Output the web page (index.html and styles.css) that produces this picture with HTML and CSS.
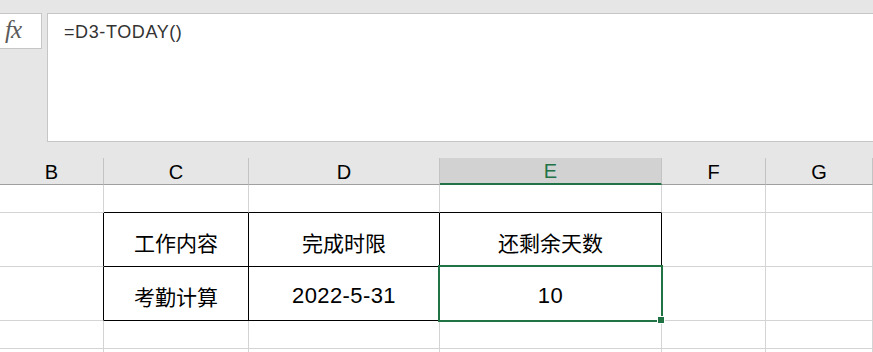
FILE: index.html
```html
<!DOCTYPE html>
<html lang="zh-CN">
<head>
    <meta charset="UTF-8">
    <meta name="viewport" content="width=device-width, initial-scale=1.0">
    <title>还剩余天数</title>
    <link rel="stylesheet" href="styles.css">
</head>
<body>
    <div class="formula-bar">
        <div class="fx">fx</div>
        <div class="formula">=D3-TODAY()</div>
    </div>
    <div class="sheet">
        <div class="head">B</div>
        <div class="head">C</div>
        <div class="head">D</div>
        <div class="head active">E</div>
        <div class="head">F</div>
        <div class="head">G</div>

        <div class="cell short"></div>
        <div class="cell short above"></div>
        <div class="cell short above"></div>
        <div class="cell short above"></div>
        <div class="cell short"></div>
        <div class="cell short"></div>

        <div class="cell tall before"></div>
        <div class="cell tall boxed">工作内容</div>
        <div class="cell tall boxed">完成时限</div>
        <div class="cell tall boxed">还剩余天数</div>
        <div class="cell tall"></div>
        <div class="cell tall"></div>

        <div class="cell tall before"></div>
        <div class="cell tall boxed">考勤计算</div>
        <div class="cell tall boxed num">2022-5-31</div>
        <div class="cell tall boxed num selected">10</div>
        <div class="cell tall"></div>
        <div class="cell tall"></div>

        <div class="cell short"></div>
        <div class="cell short"></div>
        <div class="cell short"></div>
        <div class="cell short"></div>
        <div class="cell short"></div>
        <div class="cell short"></div>

        <div class="cell last"></div>
        <div class="cell last"></div>
        <div class="cell last"></div>
        <div class="cell last"></div>
        <div class="cell last"></div>
        <div class="cell last"></div>
    </div>
</body>
</html>
```

FILE: styles.css
```css
body {
    margin: 0;
    background-color: #e6e6e6;
    font-family: "Liberation Sans", "Noto Sans CJK SC", sans-serif;
    color: #000;
    overflow: hidden;
}
.formula-bar {
    display: flex;
    align-items: flex-start;
    gap: 5px;
    padding-top: 13px;
    height: 129px;
}
.fx {
    width: 42px;
    height: 36px;
    box-sizing: border-box;
    background: white;
    border: 1px solid #c6c6c6;
    border-left: none;
    display: flex;
    align-items: center;
    padding: 0 0 3px 5px;
    font-family: "Liberation Serif", serif;
    font-style: italic;
    font-size: 25px;
    color: #5a5a5a;
    letter-spacing: -1px;
}
.formula {
    flex: 1;
    height: 129px;
    background: white;
    border: 1px solid #c6c6c6;
    border-right: none;
    box-sizing: border-box;
    padding: 7px 0 0 16px;
    font-size: 18px;
    line-height: 22px;
    color: #333;
    letter-spacing: 0.6px;
}
.sheet {
    margin-top: 16px;
    display: grid;
    grid-template-columns: 104px 145px 191px 222px 104px 107px;
    background: white;
}
.head {
    height: 27px;
    box-sizing: border-box;
    background: #e6e6e6;
    border-right: 1px solid #c3c3c3;
    border-bottom: 1px solid #9f9f9f;
    display: flex;
    align-items: center;
    justify-content: center;
    padding-top: 2px;
    font-size: 20px;
}
.head.active {
    background: #d2d2d2;
    border-bottom: 2px solid #217346;
    color: #217346;
}
.cell {
    border-right: 1px solid #d4d4d4;
    border-bottom: 1px solid #d4d4d4;
    box-sizing: border-box;
    display: flex;
    align-items: center;
    justify-content: center;
    font-size: 21px;
    padding-top: 4px;
}
.cell.short {
    height: 28px;
}
.cell.tall {
    height: 54px;
}
.cell.last {
    height: 3px;
    padding: 0;
    border-bottom: none;
}
.cell.above {
    border-bottom-color: #000;
}
.cell.before {
    border-right-color: #000;
}
.cell.boxed {
    border-right-color: #000;
    border-bottom-color: #000;
}
.cell.num {
    font-size: 22px;
    letter-spacing: 0.4px;
}
.cell.selected {
    position: relative;
}
.cell.selected::after {
    content: "";
    position: absolute;
    left: -2px;
    top: -2px;
    right: -2px;
    bottom: -2px;
    border: 2px solid #217346;
}
.cell.selected::before {
    content: "";
    position: absolute;
    right: -4px;
    bottom: -4px;
    width: 6px;
    height: 6px;
    background: #217346;
    border: 1px solid white;
    z-index: 1;
}
```
